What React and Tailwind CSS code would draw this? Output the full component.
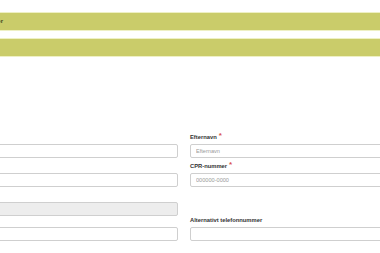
import React from "react";

function Field({ label, required, placeholder, disabled }) {
  return (
    <div className="flex flex-col">
      <div className="h-[9px] leading-[9px] text-[5.8px] font-bold text-[#333] whitespace-nowrap">
        {label}
        {required && (
          <span className="text-[#d9534f] text-[8px] leading-[6px] ml-[2px] align-top">*</span>
        )}
      </div>
      <input
        className={
          "mt-[2px] h-[14px] w-full rounded-[2px] border border-[#cfcfcf] px-[5px] text-[5.6px] text-[#555] placeholder:text-[#9a9a9a] outline-none " +
          (disabled ? "bg-[#ededed]" : "bg-white")
        }
        placeholder={placeholder}
        disabled={disabled}
      />
    </div>
  );
}

function Bar({ children }) {
  return (
    <div className="h-[19px] border border-[#eef0c4] bg-[#cacc6a] flex items-center">
      <span className="w-[124px] shrink-0 text-right text-[6px] font-bold text-[#3b4418] whitespace-nowrap">
        {children}
      </span>
    </div>
  );
}

export default function App() {
  return (
    <div
      className="w-[380px] h-[253px] overflow-hidden bg-white"
      style={{ fontFamily: '"Liberation Sans", Arial, sans-serif' }}
    >
      <div className="ml-[-122px] w-[612px] pt-[12px]">
        <Bar>Stamoplysninger</Bar>
        <div className="mt-[7px]">
          <Bar></Bar>
        </div>

        <div className="mt-[76px] grid grid-cols-2 gap-x-[12px]">
          <Field label="Fornavn" required placeholder="Fornavn" />
          <Field label="Efternavn" required placeholder="Efternavn" />

          <div className="mt-[4px]">
            <Field label="Fødselsdato" required placeholder="" />
          </div>
          <div className="mt-[4px]">
            <Field label="CPR-nummer" required placeholder="000000-0000" />
          </div>

          <div className="mt-[4px]">
            <Field label="Alder" placeholder="" disabled />
          </div>
          <div className="mt-[4px]"></div>

          <Field label="Telefonnummer" placeholder="" />
          <Field label="Alternativt telefonnummer" placeholder="" />
        </div>
      </div>
    </div>
  );
}
